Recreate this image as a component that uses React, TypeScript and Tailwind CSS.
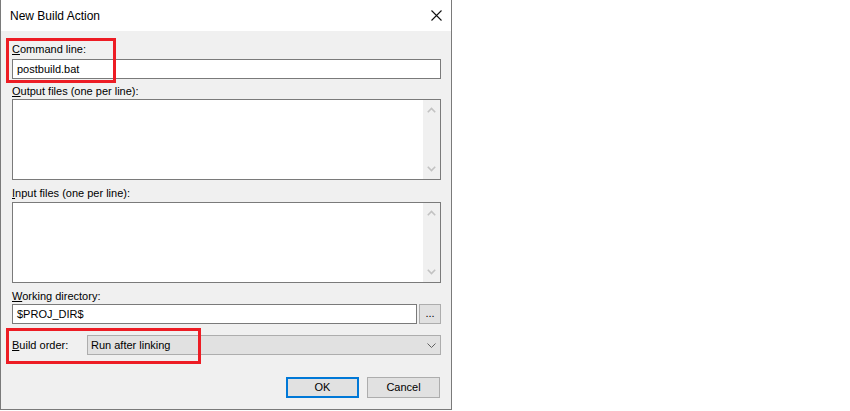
import React from 'react';

const Chevron = ({ dir, className }: { dir: 'up' | 'down'; className?: string }) => (
  <svg width="9" height="6" viewBox="0 0 9 6" className={className} fill="none">
    <path
      d={dir === 'up' ? 'M0.8 5.2 L4.5 1.5 L8.2 5.2' : 'M0.8 0.8 L4.5 4.5 L8.2 0.8'}
      stroke="currentColor"
      strokeWidth="1.6"
    />
  </svg>
);

const Label = ({ mnemonic, rest, className = '' }: { mnemonic: string; rest: string; className?: string }) => (
  <div className={`h-[14px] leading-[14px] ${className}`}>
    <span className="underline underline-offset-[1px]">{mnemonic}</span>
    {rest}
  </div>
);

const MultiLine = ({ className = '' }: { className?: string }) => (
  <div className={`h-[81px] bg-white border border-[#7a7a7a] flex justify-end ${className}`}>
    <div className="w-[17px] bg-[#f0f0f0] flex flex-col items-center justify-between py-[7px] text-[#c2c2c2]">
      <Chevron dir="up" />
      <Chevron dir="down" />
    </div>
  </div>
);

export default function App() {
  return (
    <div className="w-[850px] h-[411px] bg-white font-['Liberation_Sans',Arial,sans-serif] text-black">
      <div className="relative w-[452px] h-[410px] border-x border-b border-[#7a7a7a] bg-[#f0f0f0] flex flex-col">
        {/* Title bar */}
        <div className="h-[31px] bg-white flex items-center justify-between pl-[9px] pr-[9px] shrink-0">
          <span className="text-[12px]">New Build Action</span>
          <svg width="11" height="11" viewBox="0 0 11 11" className="mt-[-1px]">
            <path d="M0.5 0.5 L10.5 10.5 M10.5 0.5 L0.5 10.5" stroke="#111" strokeWidth="1.1" />
          </svg>
        </div>

        {/* Body */}
        <div className="ml-[11px] w-[429px] text-[11px] flex flex-col">
          <Label mnemonic="C" rest="ommand line:" className="mt-[11px]" />
          <div className="mt-[3px] h-[20px] bg-white border border-[#7a7a7a] pl-[4px] leading-[18px]">
            postbuild.bat
          </div>

          <Label mnemonic="O" rest="utput files (one per line):" className="mt-[5px]" />
          <MultiLine className="mt-[1px]" />

          <Label mnemonic="I" rest="nput files (one per line):" className="mt-[6px]" />
          <MultiLine className="mt-[2px]" />

          <Label mnemonic="W" rest="orking directory:" className="mt-[6px]" />
          <div className="mt-[1px] flex gap-[2px] h-[20px]">
            <div className="flex-1 bg-white border border-[#7a7a7a] pl-[4px] leading-[18px]">$PROJ_DIR$</div>
            <div className="w-[22px] bg-[#e1e1e1] border border-[#adadad] flex items-end justify-center leading-none pb-[4px]">
              ...
            </div>
          </div>

          <div className="mt-[11px] flex items-center h-[20px]">
            <Label mnemonic="B" rest="uild order:" className="w-[75px] shrink-0" />
            <div className="flex-1 h-[20px] bg-[#e1e1e1] border border-[#adadad] flex items-center justify-between pl-[3px] pr-[4px]">
              <span>Run after linking</span>
              <svg width="9" height="5" viewBox="0 0 9 5" fill="none" className="text-[#606060]">
                <path d="M0.5 0.5 L4.5 4.5 L8.5 0.5" stroke="currentColor" strokeWidth="1" />
              </svg>
            </div>
          </div>

          <div className="mt-[22px] flex justify-end gap-[8px] pr-[1px]">
            <button className="w-[73px] h-[21px] bg-[#e1e1e1] border-2 border-[#0078d7] text-[11px] leading-none">
              OK
            </button>
            <button className="w-[73px] h-[21px] bg-[#e1e1e1] border border-[#adadad] text-[11px] leading-none">
              Cancel
            </button>
          </div>
        </div>

        {/* Annotation boxes */}
        <div className="absolute left-[5px] top-[38px] w-[110px] h-[45px] border-[3px] border-[#ed1c24]" />
        <div className="absolute left-[5px] top-[328px] w-[195px] h-[36px] border-[3px] border-[#ed1c24]" />
      </div>
    </div>
  );
}
